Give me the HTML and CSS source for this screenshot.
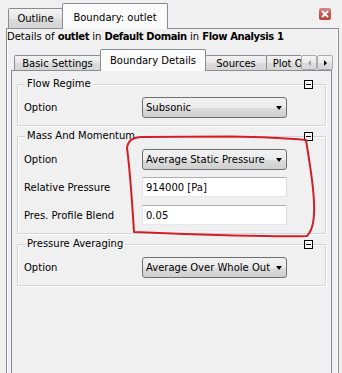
FILE: index.html
```html
<!DOCTYPE html>
<html lang="en">
<head>
  <meta charset="UTF-8" />
  <title>Boundary: outlet</title>
  <link rel="stylesheet" href="styles.css">
</head>
<body>
  <div class="window">
    <div class="outer-tabs">
      <div class="tab tab-outline">Outline</div>
      <div class="tab tab-boundary active">Boundary: outlet</div>
      <div class="close-btn" title="Close">
        <svg width="8" height="8" viewBox="0 0 8 8"><path d="M1 1L7 7M7 1L1 7" stroke="#fff" stroke-width="2"/></svg>
      </div>
    </div>

    <div class="outer-pane">
      <div class="details">Details of <b>outlet</b> in <b>Default Domain</b> in <b>Flow Analysis 1</b></div>

      <div class="inner-tabs">
        <div class="tab-strip">
          <div class="tab tab-basic">Basic Settings</div>
          <div class="tab tab-details active">Boundary Details</div>
          <div class="tab tab-sources">Sources</div>
          <div class="tab tab-plot">Plot Options</div>
        </div>
        <div class="scroll-btn disabled"><span class="arrow left"></span></div>
        <div class="scroll-btn"><span class="arrow right"></span></div>
      </div>

      <div class="inner-pane">
        <div class="group">
          <div class="group-head"><span class="group-title">Flow Regime</span><span class="collapse"></span></div>
          <div class="row"><label>Option</label><div class="combo"><span class="combo-text">Subsonic</span></div></div>
        </div>

        <div class="group">
          <div class="group-head"><span class="group-title">Mass And Momentum</span><span class="collapse"></span></div>
          <div class="row"><label>Option</label><div class="combo"><span class="combo-text">Average Static Pressure</span></div></div>
          <div class="row"><label>Relative Pressure</label><div class="field">914000 [Pa]</div></div>
          <div class="row"><label>Pres. Profile Blend</label><div class="field">0.05</div></div>
        </div>

        <div class="group">
          <div class="group-head"><span class="group-title">Pressure Averaging</span><span class="collapse"></span></div>
          <div class="row"><label>Option</label><div class="combo"><span class="combo-text">Average Over Whole Outlet</span></div></div>
        </div>
      </div>
    </div>

    <!-- hand-drawn red circle over the mass and momentum settings -->
    <svg class="markup" width="342" height="373" viewBox="0 0 342 373">
      <path d="M127 148 C128 140 133 137 142 137 L230 136.5 C260 137 290 138.5 306 140 C309 160 313 180 314 202 C315 222 311 232 307 236 C280 237 200 235 134 232 C132 200 130 170 127 148 Z"
            fill="none" stroke="#d21f27" stroke-width="2" stroke-linejoin="round"/>
    </svg>
  </div>
</body>
</html>
```

FILE: styles.css
```css
body {
  margin: 0;
  background-color: #f0f0f0;
  color: #000;
  font-family: "DejaVu Sans", "Liberation Sans", sans-serif;
  font-size: 10px;
}

.window {
  position: relative;
  width: 342px;
  height: 373px;
  overflow: hidden;
}

/* tabs, shared */
.tab {
  position: relative;
  z-index: 1;
  box-sizing: border-box;
  display: flex;
  align-items: center;
  justify-content: center;
  white-space: nowrap;
  flex-shrink: 0;
  border: 1px solid #898c95;
  border-bottom: none;
  border-radius: 2px 2px 0 0;
  background: linear-gradient(#f3f3f3, #e6e6e6 50%, #dadada 51%, #d6d6d6);
}

.tab + .tab {
  margin-left: -1px;
}

.tab.active {
  background: #fbfbfb;
  margin-bottom: 0;
}

/* outer tab bar */
.outer-tabs {
  display: flex;
  align-items: flex-end;
  height: 29px;
  padding-left: 8px;
}

.outer-tabs .tab {
  height: 20px;
  margin-bottom: 1px;
}

.outer-tabs .tab.active {
  height: 26px;
  margin-bottom: 0;
  padding-top: 2px;
}

.tab-outline { width: 55px; }
.tab-boundary { width: 106px; }

.close-btn {
  margin-left: auto;
  align-self: flex-start;
  margin-top: 8px;
  margin-right: 11px;
  width: 12px;
  height: 12px;
  border-radius: 2px;
  background: linear-gradient(#dc8a88, #c65450 50%, #b94440);
  display: flex;
  align-items: center;
  justify-content: center;
}

/* outer pane */
.outer-pane {
  margin-top: -1px;
  margin-left: 6px;
  width: 333px;
  height: 345px;
  box-sizing: border-box;
  border: 1px solid #8c8e94;
  border-bottom: none;
  box-shadow: inset 1px 0 #fff, inset -1px 0 #fff;
  background-color: #f0f0f0;
}

.details {
  height: 20px;
  line-height: 15px;
  white-space: nowrap;
}

.details b {
  letter-spacing: -0.4px;
}

/* inner tab bar */
.inner-tabs {
  display: flex;
  align-items: flex-end;
  height: 22px;
  margin-left: 4px;
  padding-left: 3px;
}

.tab-strip {
  display: flex;
  align-items: flex-end;
  width: 287px;
  height: 22px;
  overflow: hidden;
  flex-shrink: 0;
}

.inner-tabs .tab {
  height: 15px;
  margin-bottom: 1px;
}

.inner-tabs .tab.active {
  height: 22px;
  margin-bottom: 0;
}

.tab-basic { width: 87px; }
.tab-details { width: 106px; }
.tab-sources { width: 62px; }
.tab-plot { width: 74px; }

.scroll-btn {
  position: relative;
  z-index: 1;
  box-sizing: border-box;
  width: 16px;
  height: 15px;
  margin-bottom: 1px;
  border: 1px solid #a9abb0;
  border-radius: 2px;
  background: linear-gradient(#f6f6f6, #e9e9e9 50%, #dcdcdc 51%, #d8d8d8);
  display: flex;
  align-items: center;
  justify-content: center;
}

.arrow {
  width: 0;
  height: 0;
  border-top: 3px solid transparent;
  border-bottom: 3px solid transparent;
}

.arrow.left { border-right: 3px solid #000; }
.arrow.right { border-left: 3px solid #000; }

.scroll-btn.disabled .arrow.left { border-right-color: #a0a0a0; }

/* inner pane with group boxes */
.inner-pane {
  position: relative;
  margin: -1px 6px 0 4px;
  height: 310px;
  padding: 0 5px;
  border: 1px solid #898c95;
  border-bottom: none;
  background-color: #f0f0f0;
}

.group {
  margin-top: 10px;
  border: 1px solid #d5d5d5;
  box-shadow: inset 1px 1px #fff, 1px 1px #fff;
  padding-bottom: 4px;
}

.group:first-child {
  margin-top: 13px;
}

.group-head {
  display: flex;
  justify-content: space-between;
  align-items: center;
  height: 16px;
  margin: -9px 0 1px;
}

.group-title {
  margin-left: 7px;
  padding: 0 2px;
  line-height: 16px;
  background-color: #f0f0f0;
}

.collapse {
  position: relative;
  width: 9px;
  height: 9px;
  box-sizing: border-box;
  margin-right: 12px;
  border: 1px solid #000;
  background-color: #f4f4f4;
}

.collapse::after {
  content: "";
  position: absolute;
  left: 1px;
  top: 3px;
  width: 5px;
  height: 1px;
  background-color: #000;
}

.row {
  display: flex;
  align-items: center;
  height: 28px;
  padding-left: 6px;
}

.row label {
  width: 118px;
  flex-shrink: 0;
}

.combo, .field {
  box-sizing: border-box;
  width: 145px;
  display: flex;
  align-items: center;
  padding-left: 3px;
  white-space: nowrap;
}

.combo {
  position: relative;
  height: 21px;
  padding-right: 16px;
  border: 1px solid #707070;
  border-radius: 3px;
  background: linear-gradient(#f2f2f2, #ebebeb 50%, #dddddd 51%, #cfcfcf);
}

.combo-text {
  flex: 1;
  overflow: hidden;
}

.combo::after {
  content: "";
  position: absolute;
  right: 4px;
  top: 8px;
  border-left: 3px solid transparent;
  border-right: 3px solid transparent;
  border-top: 4px solid #000;
}

.field {
  height: 20px;
  border: 1px solid;
  border-color: #abadb3 #dbdfe6 #e3e9ef #e2e3ea;
  background-color: #fff;
}

.markup {
  position: absolute;
  left: 0;
  top: 0;
  pointer-events: none;
}
```
